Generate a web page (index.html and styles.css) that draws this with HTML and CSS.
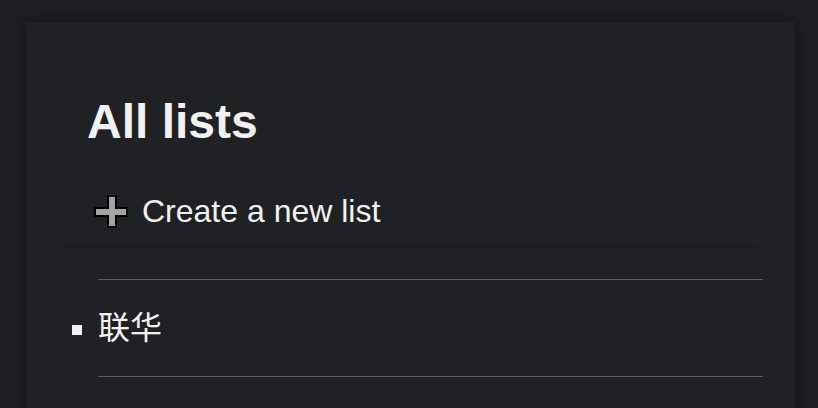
FILE: index.html
```html
<!DOCTYPE html>
<html lang="en">
<head>
  <meta charset="UTF-8">
  <meta name="viewport" content="width=device-width, initial-scale=1">
  <title>All lists</title>
  <link rel="stylesheet" href="styles.css">
</head>

<body>
  <div class="card">
    <div class="header">
      <h1>All lists</h1>
      <button class="create-btn">
        <svg class="plus" width="36" height="35" viewBox="0 0 36 35">
          <path d="M15 2 H23 V14 H34 V22 H23 V33 H15 V22 H2 V14 H15 Z" fill="#a3a3a3" stroke="#000" stroke-width="2"/>
        </svg>
        Create a new list
      </button>
    </div>

    <ul class="lists">
      <li class="list-item">联华</li>
    </ul>
  </div>
</body>
</html>
```

FILE: styles.css
```css
* {
  box-sizing: border-box;
}

body {
  margin: 0;
  background: #1e1f22;
  color: #f1f1f1;
  font-family: "Liberation Sans", Arial, "Noto Sans CJK SC", sans-serif;
}

.card {
  margin: 22px 23px 0 26px;
  min-height: 420px;
  background: #202124;
  box-shadow: 0 0 14px rgba(0, 0, 0, 0.45);
}

.header {
  margin: 0 36px;
  padding-top: 72px;
  box-shadow: 0 2px 2px -2px rgba(0, 0, 0, 0.5);
}

.header h1 {
  margin: 0 0 43px;
  padding-left: 25px;
  font-size: 48px;
  line-height: 56px;
}

.create-btn {
  display: flex;
  align-items: center;
  padding: 0 0 16px 31px;
  background: none;
  border: none;
  color: inherit;
  font: inherit;
  font-size: 32px;
  line-height: 37px;
  cursor: pointer;
}

.plus {
  margin-right: 13px;
}

.lists {
  margin: 33px 32px 0 72px;
  padding: 0;
  list-style: square;
  border-top: 1px solid #5f6063;
}

.list-item {
  padding: 24px 0;
  font-size: 32px;
  line-height: 48px;
  border-bottom: 1px solid #5f6063;
}
```
